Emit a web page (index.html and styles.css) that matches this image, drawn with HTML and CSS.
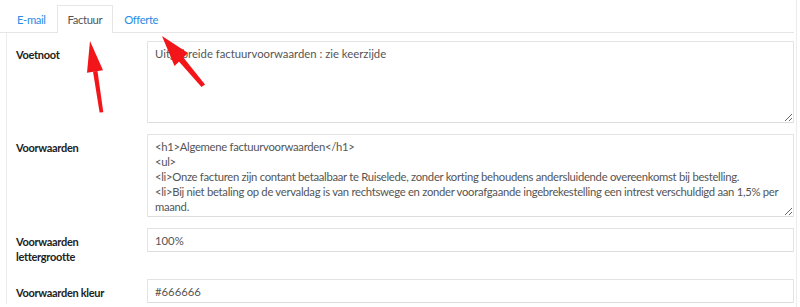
FILE: index.html
```html
<!DOCTYPE html>
<html lang="nl">
<head>
    <title>Instellingen - Factuur</title>
    <meta charset="utf-8">
    <meta name="viewport" content="width=device-width, initial-scale=1">
    <link rel="stylesheet" href="styles.css">
</head>
<body>
    <div class="box">
        <ul class="nav-tabs">
            <li><a href="#">E-mail</a></li>
            <li class="active"><a href="#">Factuur</a></li>
            <li><a href="#">Offerte</a></li>
        </ul>

        <div class="tab-content">
            <div class="form-row">
                <label class="form-label" for="voetnoot">Voetnoot</label>
                <textarea id="voetnoot" class="form-control area-footer">Uitgebreide factuurvoorwaarden : zie keerzijde</textarea>
            </div>

            <div class="form-row">
                <label class="form-label" for="voorwaarden">Voorwaarden</label>
                <textarea id="voorwaarden" class="form-control area-terms">&lt;h1&gt;Algemene factuurvoorwaarden&lt;/h1&gt;
&lt;ul&gt;
&lt;li&gt;Onze facturen zijn contant betaalbaar te Ruiselede, zonder korting behoudens andersluidende overeenkomst bij bestelling.
&lt;li&gt;Bij niet betaling op de vervaldag is van rechtswege en zonder voorafgaande ingebrekestelling een intrest verschuldigd aan 1,5% per maand.
&lt;li&gt;Bij niet betaling op de vervaldag wordt het factuurbedrag verhoogd met 10% met een minimum van 50 euro.
&lt;li&gt;Klachten dienen schriftelijk te gebeuren binnen de 8 dagen na factuurdatum.
&lt;li&gt;In geval van betwisting zijn enkel de rechtbanken van Brugge bevoegd.
&lt;/ul&gt;</textarea>
            </div>

            <div class="form-row">
                <label class="form-label" for="grootte">Voorwaarden lettergrootte</label>
                <input type="text" id="grootte" class="form-control" value="100%">
            </div>

            <div class="form-row">
                <label class="form-label" for="kleur">Voorwaarden kleur</label>
                <input type="text" id="kleur" class="form-control" value="#666666">
            </div>
        </div>

        <!-- rode pijlen over de tabs -->
        <svg class="arrows" width="800" height="307" viewBox="0 0 800 307">
            <polygon points="99.6,112.5 103.3,112.2 97.5,71 93,71.6" fill="#f2151a"/>
            <polygon points="90,41 103,70.2 87,72.8" fill="#f2151a"/>
            <polygon points="201.5,87 205,84.5 183,57 178.5,61" fill="#f2151a"/>
            <polygon points="162,36 188,53 174.5,66" fill="#f2151a"/>
        </svg>
    </div>
</body>
</html>
```

FILE: styles.css
```css
body {
    margin: 0;
    font-family: Lato, "Open Sans", sans-serif;
    font-size: 11.3px;
    color: #333;
    background-color: #fff;
}
.box {
    position: relative;
    width: 796px;
    height: 307px;
    border-right: 1px solid #ececec;
    overflow: hidden;
}
.nav-tabs {
    display: flex;
    height: 32px;
    margin: 0 2px 0 0;
    padding: 0 0 0 6px;
    list-style: none;
    border-bottom: 1px solid #e6e6e6;
}
.nav-tabs li {
    margin-top: 5px;
    border: 1px solid transparent;
    border-bottom: none;
}
.nav-tabs li.active {
    border-color: #e6e6e6;
    background-color: #fff;
    margin-bottom: -1px;
}
.nav-tabs a {
    display: block;
    padding: 0 10px;
    line-height: 27px;
    letter-spacing: -0.4px;
    color: #2a8ce6;
    text-decoration: none;
}
.nav-tabs li.active a {
    color: #555;
}
.tab-content {
    margin: 0 2px 0 6px;
    padding: 8px 0 0 9px;
    border-left: 1px solid #ececec;
}
.form-row {
    display: grid;
    grid-template-columns: 131px 1fr;
    margin-bottom: 11px;
}
.form-label {
    padding: 6px 20px 4px 0;
    line-height: 15px;
    font-size: 11px;
    font-weight: bold;
    letter-spacing: -0.3px;
    color: #222;
}
.form-control {
    box-sizing: border-box;
    width: 100%;
    margin: 0;
    padding: 0 7px;
    border: 1px solid #e3e3e3;
    border-bottom-color: #dcdcdc;
    border-radius: 1px;
    font-family: inherit;
    font-size: 11.3px;
    color: #555;
    background-color: #fff;
    outline: none;
}
input.form-control {
    height: 24px;
}
textarea.form-control {
    padding-top: 4px;
    padding-bottom: 4px;
    line-height: 15px;
}
.area-footer {
    height: 82px;
}
.area-terms {
    height: 83px;
    padding-top: 3px;
    letter-spacing: -0.3px;
    overflow-y: scroll;
}
.area-terms::-webkit-scrollbar {
    width: 10px;
}
.area-terms::-webkit-scrollbar-track {
    background-color: #f1f1f1;
}
.area-terms::-webkit-scrollbar-thumb {
    background-color: #c1c1c1;
}
.area-terms::-webkit-scrollbar-button:vertical:start:decrement,
.area-terms::-webkit-scrollbar-button:vertical:end:increment {
    display: block;
    height: 11px;
    background-color: #f1f1f1;
}
.arrows {
    position: absolute;
    top: 0;
    left: 0;
    pointer-events: none;
}
```
